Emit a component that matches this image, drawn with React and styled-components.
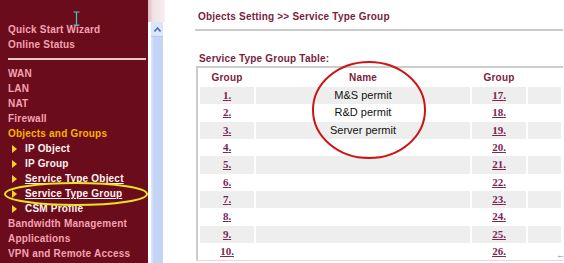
import React from "react";
import styled, { createGlobalStyle } from "styled-components";

const Global = createGlobalStyle`
  html, body { margin: 0; padding: 0; background: #ffffff; }
  body { font-family: "Liberation Sans", Arial, sans-serif; }
`;

const Page = styled.div`
  position: relative;
  display: flex;
  width: 564px;
  height: 263px;
  overflow: hidden;
  background: #ffffff;
`;

const Sidebar = styled.div`
  width: 148px;
  flex: none;
  box-sizing: border-box;
  padding: 22px 0 0 8px;
  background: #6b0c1c;
  font-size: 10px;
  font-weight: bold;
  letter-spacing: 0.2px;
`;

const MenuItem = styled.div`
  height: 15px;
  line-height: 15px;
  white-space: nowrap;
  color: ${(p) => (p.$active ? "#f5b400" : "#f4a2b2")};
`;

const Divider = styled.div`
  height: 2px;
  margin: 6px 2px 6px 0;
  background: #e9c9cb;
`;

const SubItem = styled.div`
  display: flex;
  align-items: center;
  height: 15px;
  padding-left: 4px;
  white-space: nowrap;
  color: #fff2f2;
  span {
    text-decoration: ${(p) => (p.$link ? "underline" : "none")};
  }
`;

const Arrow = styled.i`
  width: 0;
  height: 0;
  margin-right: 8px;
  border-left: 5px solid #f7cf2a;
  border-top: 4px solid transparent;
  border-bottom: 4px solid transparent;
`;

const ScrollColumn = styled.div`
  width: 17px;
  flex: none;
  display: flex;
  flex-direction: column;
`;

const ScrollCap = styled.div`
  height: 22px;
  background: linear-gradient(90deg, #e2b8bf 0, #f1e2e4 5px, #f7f0f0 100%);
`;

const ScrollTrack = styled.div`
  flex: 1;
  display: flex;
  flex-direction: column;
  margin: 0 2px 0 3px;
  background: linear-gradient(90deg, #dfe8fb 0, #c4d4f7 3px, #c4d4f7 100%);
`;

const ScrollButton = styled.div`
  height: 14px;
  display: flex;
  align-items: center;
  justify-content: center;
  background: #dbe6fb;
  border-bottom: 1px solid #b8c9f0;
`;

const Main = styled.div`
  position: relative;
  flex: 1;
  box-sizing: border-box;
  padding: 10px 2px 0 30px;
`;

const Title = styled.div`
  height: 14px;
  line-height: 14px;
  padding: 0 0 5px 3px;
  border-bottom: 2px solid #cbc9c9;
  color: #7b1c43;
  font-size: 10px;
  font-weight: bold;
  letter-spacing: 0.2px;
  white-space: nowrap;
`;

const Caption = styled.div`
  margin-top: 20px;
  height: 15px;
  line-height: 15px;
  padding-left: 4px;
  color: #7b1c43;
  font-size: 10px;
  font-weight: bold;
  letter-spacing: 0.2px;
`;

const Table = styled.table`
  width: 367px;
  table-layout: fixed;
  border-collapse: separate;
  border-spacing: 2px 0;
  border-top: 2px solid #cccccc;
  border-left: 2px solid #cccccc;
  border-bottom: 1px solid #dddddd;
  margin-left: 1px;
`;

const Head = styled.th`
  height: 19px;
  padding: 0;
  color: #7b1c43;
  font-size: 10px;
  font-weight: bold;
  letter-spacing: 0.2px;
  text-align: center;
`;

const Cell = styled.td`
  height: 17.33px;
  padding: 0;
  text-align: center;
  background: ${(p) => (p.$shade ? "#eeeeee" : "#ffffff")};
  color: #111111;
  font-size: 11px;
  line-height: 17px;
`;

const Num = styled.a`
  color: #7a2450;
  font-family: "Liberation Serif", "Times New Roman", serif;
  font-size: 11px;
  font-weight: bold;
  text-decoration: underline;
`;

const Overlay = styled.svg`
  position: absolute;
  left: 0;
  top: 0;
  pointer-events: none;
`;

const Corner = styled.div`
  position: absolute;
  right: 0;
  bottom: 3px;
  color: #8a8a8a;
  font-size: 9px;
  line-height: 9px;
`;

const names = ["M&S permit", "R&D permit", "Server permit"];
const rows = Array.from({ length: 10 }, (_, i) => i);

export default function App() {
  return (
    <>
      <Global />
      <Page>
        <Sidebar>
          <MenuItem>Quick Start Wizard</MenuItem>
          <MenuItem>Online Status</MenuItem>
          <Divider />
          <MenuItem>WAN</MenuItem>
          <MenuItem>LAN</MenuItem>
          <MenuItem>NAT</MenuItem>
          <MenuItem>Firewall</MenuItem>
          <MenuItem $active>Objects and Groups</MenuItem>
          <SubItem><Arrow /><span>IP Object</span></SubItem>
          <SubItem><Arrow /><span>IP Group</span></SubItem>
          <SubItem $link><Arrow /><span>Service Type Object</span></SubItem>
          <SubItem $link><Arrow /><span>Service Type Group</span></SubItem>
          <SubItem><Arrow /><span>CSM Profile</span></SubItem>
          <MenuItem>Bandwidth Management</MenuItem>
          <MenuItem>Applications</MenuItem>
          <MenuItem>VPN and Remote Access</MenuItem>
        </Sidebar>

        <ScrollColumn>
          <ScrollCap />
          <ScrollTrack>
            <ScrollButton>
              <svg width="7" height="5" viewBox="0 0 7 5">
                <path d="M0.5 4.5 L3.5 1 L6.5 4.5" fill="none" stroke="#4d6fb8" strokeWidth="1.6" />
              </svg>
            </ScrollButton>
          </ScrollTrack>
        </ScrollColumn>

        <Main>
          <Title>Objects Setting &gt;&gt; Service Type Group</Title>
          <Caption>Service Type Group Table:</Caption>
          <Table>
            <colgroup>
              <col style={{ width: 54 }} />
              <col style={{ width: 214 }} />
              <col style={{ width: 54 }} />
              <col />
            </colgroup>
            <thead>
              <tr>
                <Head>Group</Head>
                <Head>Name</Head>
                <Head>Group</Head>
                <Head />
              </tr>
            </thead>
            <tbody>
              {rows.map((i) => (
                <tr key={i}>
                  <Cell $shade={i % 2 === 0}><Num>{i + 1}.</Num></Cell>
                  <Cell $shade={i % 2 === 0}>{names[i] || ""}</Cell>
                  <Cell $shade={i % 2 === 0}><Num>{i + 17}.</Num></Cell>
                  <Cell $shade={i % 2 === 0} />
                </tr>
              ))}
            </tbody>
          </Table>
          <Corner>←</Corner>
        </Main>

        <Overlay width="564" height="263" viewBox="0 0 564 263">
          <ellipse cx="76" cy="194" rx="71" ry="11" fill="none" stroke="#ece21e" strokeWidth="2" />
          <ellipse cx="369" cy="110" rx="56" ry="48" fill="none" stroke="#cc1414" strokeWidth="2" />
          <g stroke="#3cc8bc" strokeWidth="1.2" fill="none">
            <path d="M73.5 12 H79.5 M76.5 12 V25 M73.5 25 H79.5" />
          </g>
        </Overlay>
      </Page>
    </>
  );
}
